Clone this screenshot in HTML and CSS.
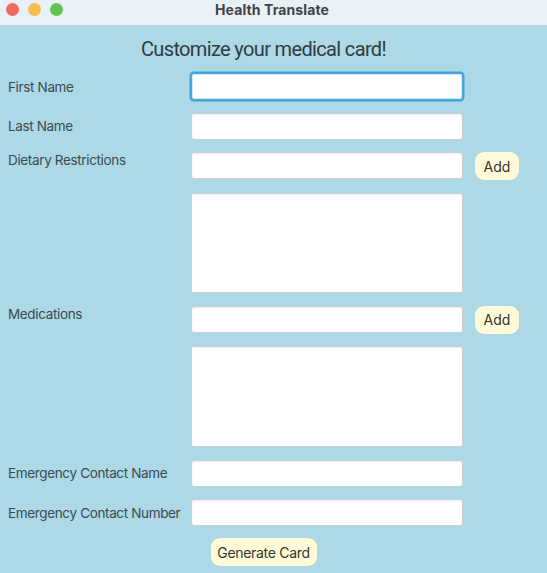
FILE: index.html
```html
<!DOCTYPE html>
<html lang="en">
<head>
<meta charset="utf-8">
<title>Health Translate</title>
<link rel="stylesheet" href="styles.css">
</head>
<body>
<div class="window">
  <header class="titlebar">
    <div class="lights">
      <span class="light red"></span>
      <span class="light yellow"></span>
      <span class="light green"></span>
    </div>
    <div class="wintitle">Health Translate</div>
  </header>
  <main class="content">
    <h1 class="heading">Customize your medical card!</h1>
    <form class="form">
      <label class="label">First Name</label>
      <input class="field focused" type="text">
      <span></span>

      <label class="label">Last Name</label>
      <input class="field" type="text">
      <span></span>

      <label class="label top">Dietary Restrictions</label>
      <input class="field" type="text">
      <button type="button" class="btn add">Add</button>

      <span></span>
      <textarea class="area"></textarea>
      <span></span>

      <label class="label top">Medications</label>
      <input class="field" type="text">
      <button type="button" class="btn add">Add</button>

      <span></span>
      <textarea class="area"></textarea>
      <span></span>

      <label class="label">Emergency Contact Name</label>
      <input class="field" type="text">
      <span></span>

      <label class="label">Emergency Contact Number</label>
      <input class="field" type="text">
      <span></span>
    </form>
    <div class="actions">
      <button type="button" class="btn generate">Generate Card</button>
    </div>
  </main>
</div>
</body>
</html>
```
FILE: styles.css
```css
* { box-sizing: border-box; }
html, body {
  margin: 0;
  padding: 0;
  width: 547px;
  height: 573px;
  overflow: hidden;
  background: #add8e6;
  font-family: "Inter", "Liberation Sans", sans-serif;
}
.window {
  width: 547px;
  height: 573px;
  background: #add8e6;
}
.titlebar {
  position: relative;
  height: 26px;
  background: #e9f0f6;
  border-bottom: 1px solid #b9d3dd;
  display: flex;
  align-items: center;
  justify-content: center;
}
.lights {
  position: absolute;
  left: 6px;
  top: 3px;
  display: flex;
  gap: 9px;
}
.light {
  width: 13px;
  height: 13px;
  border-radius: 50%;
  display: block;
}
.red { background: #ee6a5e; }
.yellow { background: #f5bd4f; }
.green { background: #61c454; }
.wintitle {
  font-size: 14px;
  font-weight: 700;
  color: #404448;
  margin-top: -7px;
  margin-left: -3px;
  letter-spacing: 0.1px;
}
.content {
  width: 511px;
  margin-left: 8px;
}
.heading {
  margin: 0;
  padding-top: 10px;
  height: 47px;
  text-align: center;
  font-family: "Roboto", "Inter", sans-serif;
  font-size: 20px;
  font-weight: 400;
  color: #2f3b41;
  letter-spacing: -0.65px;
  line-height: 26px;
}
.form {
  display: grid;
  grid-template-columns: 183px 272px 56px;
  grid-auto-rows: auto;
  row-gap: 12.6px;
  margin: 0;
}
.label {
  align-self: center;
  font-size: 13.5px;
  color: #3a4a51;
  line-height: 17px;
  letter-spacing: -0.35px;
  white-space: nowrap;
  padding-top: 1px;
}
.label.top {
  align-self: start;
  padding-top: 0;
}
.field {
  display: block;
  height: 27px;
  width: 272px;
  margin: 0;
  background: #fff;
  border: 1px solid #c9cfd2;
  border-radius: 3px;
  box-shadow: inset 0 1px 2px rgba(0,0,0,0.08);
  outline: none;
  font: inherit;
}
.field.focused {
  border: 1px solid #4aa8dc;
  box-shadow: 0 0 0 1.5px #3ea2da, inset 0 0 0 1px #cfe9f6;
}
.area {
  display: block;
  height: 100.5px;
  width: 272px;
  margin: 0;
  background: #fff;
  border: 1px solid #c9cfd2;
  border-radius: 2px;
  box-shadow: inset 0 1px 2px rgba(0,0,0,0.06);
  resize: none;
  outline: none;
}
.btn {
  font-family: inherit;
  font-size: 14px;
  color: #333;
  background: #fffbd9;
  border: none;
  border-radius: 9px;
  height: 28px;
  padding: 0;
  cursor: pointer;
}
.add {
  width: 44px;
  margin-left: 12px;
  align-self: center;
}
.actions {
  display: flex;
  justify-content: center;
  margin-top: 12px;
  padding-left: 0;
}
.generate {
  width: 106px;
  letter-spacing: -0.3px;
}
```
